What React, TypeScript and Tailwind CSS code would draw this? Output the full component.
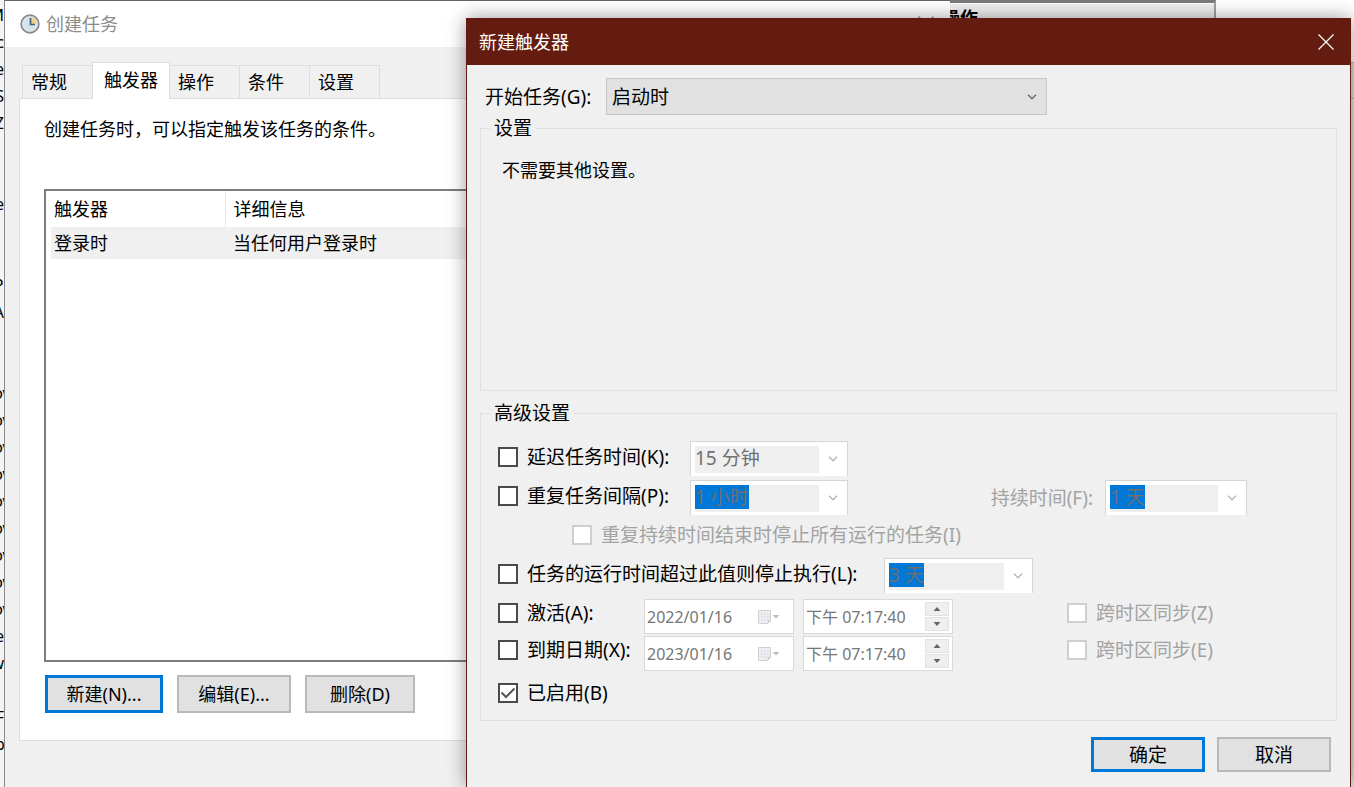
import { ReactNode, useState } from "react";
import clsx from "clsx";

const TABS = ["常规", "触发器", "操作", "条件", "设置"];

const BACKDROP_LINES = [
  "M", "c", "e", "S", "Z", "", "", "e", "", "", "Pr", "A", "", "",
  "ov", "ov", "ov", "ov", "ov", "ov", "ov", "ov", "ov", "e", "w", "", "F", "pl",
];

function ClockIcon() {
  return (
    <svg viewBox="0 0 20 20" className="size-5 shrink-0" aria-hidden="true">
      <circle cx="10" cy="10" r="9" fill="#b4b6b8" stroke="#85888a" strokeWidth="1.4" />
      <circle cx="10" cy="10" r="7.2" fill="#d3e4ee" stroke="#eceeef" strokeWidth="1" />
      <path d="M10 10V3.200A6.800 6.800 0 0 1 16.800 10Z" fill="#efd28a" />
      <path d="M10.500 4v6.500h4.500" fill="none" stroke="#4a6275" strokeWidth="1.7" />
    </svg>
  );
}

function CloseIcon() {
  return (
    <svg viewBox="0 0 16 16" className="size-4" fill="none" stroke="currentColor" strokeWidth="1.2">
      <path d="M.5.5l15 15M15.5.5l-15 15" />
    </svg>
  );
}

function Chevron() {
  return (
    <svg
      viewBox="0 0 10 6"
      className="pointer-events-none h-[6px] w-[10px] shrink-0"
      fill="none"
      stroke="currentColor"
      strokeWidth="1.3"
      aria-hidden="true"
    >
      <path d="M1 .8l4 4 4-4" />
    </svg>
  );
}

function CalendarIcon() {
  return (
    <svg viewBox="0 0 22 14" className="h-[14px] w-[22px]" aria-hidden="true">
      <path d="M.5.5h12v10l-3 3h-9Z" fill="#f4f5f9" stroke="#cfcfcf" />
      <path d="M1 4h11M1 7h11M1 10h11M4 1v12M7 1v12M10 1v9" stroke="#dadce2" strokeWidth=".8" />
      <path d="M12.500 10.500h-3v3Z" fill="#c4c6ca" />
      <path d="M14.500 5h7l-3.500 3.500Z" fill="#bdbdb8" />
    </svg>
  );
}

type PushButtonProps = {
  children: ReactNode;
  primary?: boolean;
  className?: string;
};

function PushButton({ children, primary, className }: PushButtonProps) {
  return (
    <button
      type="button"
      className={clsx(
        "bg-[#e1e1e1]",
        primary ? "border-[3px] border-[#0078d7]" : "border-2 border-[#b9b9b9]",
        className
      )}
    >
      {children}
    </button>
  );
}

type CheckProps = {
  label: string;
  disabled?: boolean;
  defaultChecked?: boolean;
  className?: string;
};

function Check({ label, disabled, defaultChecked, className }: CheckProps) {
  return (
    <label
      className={clsx(
        "flex shrink-0 items-center gap-[9px] whitespace-nowrap",
        disabled && "text-[#a3a3a3]",
        className
      )}
    >
      <span className="grid size-5 place-items-center">
        <input
          type="checkbox"
          disabled={disabled}
          defaultChecked={defaultChecked}
          className="peer col-start-1 row-start-1 size-5 appearance-none border-2 border-[#4a4a4a] bg-white disabled:border-[#cfcfcf]"
        />
        <svg
          viewBox="0 0 16 12"
          className="pointer-events-none col-start-1 row-start-1 hidden h-3 w-4 peer-checked:block"
          fill="none"
          stroke="#555"
          strokeWidth="2"
        >
          <path d="M1.500 5.500l4.500 4.500L14.500 1.500" />
        </svg>
      </span>
      {label}
    </label>
  );
}

type ComboProps = {
  name: string;
  value: string;
  selected?: boolean;
  className?: string;
};

function Combo({ name, value, selected, className }: ComboProps) {
  return (
    <div
      className={clsx(
        "flex h-[35px] shrink-0 items-center border border-b-0 border-[#d6d6d6] bg-white pl-1 text-[#b4b4b4]",
        className
      )}
    >
      <div className="h-[27px] flex-1 bg-[#efefef]">
        <select
          aria-label={name}
          disabled
          className={clsx(
            "field-sizing-content block h-6 appearance-none leading-6 text-[#6f6f6f] disabled:opacity-100",
            selected && "bg-[#0078d7]"
          )}
        >
          <option>{value}</option>
        </select>
      </div>
      <span className="flex w-7 justify-center">
        <Chevron />
      </span>
    </div>
  );
}

function DateField({ name, value }: { name: string; value: string }) {
  return (
    <div className="flex h-[35px] w-[150px] shrink-0 items-center border border-[#d9d9d9] bg-white pr-[13px]">
      <input
        aria-label={name}
        disabled
        defaultValue={value}
        className="w-full min-w-0 flex-1 px-[2px] text-base text-[#767676]"
      />
      <CalendarIcon />
    </div>
  );
}

function TimeField({ name, value }: { name: string; value: string }) {
  return (
    <div className="flex h-[35px] w-[150px] shrink-0 items-center border border-[#d9d9d9] bg-white pr-[3px]">
      <input
        aria-label={name}
        disabled
        defaultValue={value}
        className="w-full min-w-0 flex-1 px-[2px] text-base text-[#767676]"
      />
      <div className="flex w-6 flex-col gap-px text-[#666]">
        <button type="button" disabled aria-label="增加" className="grid h-[14px] place-items-center border border-[#e2e2e2] bg-[#efefef]">
          <svg viewBox="0 0 8 4" className="h-1 w-2" fill="currentColor">
            <path d="M4 0l3.500 4h-7Z" />
          </svg>
        </button>
        <button type="button" disabled aria-label="减少" className="grid h-[14px] place-items-center border border-[#e2e2e2] bg-[#efefef]">
          <svg viewBox="0 0 8 4" className="h-1 w-2" fill="currentColor">
            <path d="M4 4L.5 0h7Z" />
          </svg>
        </button>
      </div>
    </div>
  );
}

function Backdrop() {
  return (
    <>
      <div className="absolute inset-y-0 left-0 w-1 overflow-hidden bg-[#f4f4f4] pt-px text-base">
        {BACKDROP_LINES.map((line, i) => (
          <div
            key={i}
            className={clsx("flex h-[27px] items-center", line.length > 1 ? "justify-center" : "justify-end")}
          >
            {line}
          </div>
        ))}
      </div>
      <div className="absolute top-0 right-[138px] left-1/2 h-8 border-t-[3px] border-r-2 border-t-[#7b7b7b] border-r-[#a0a0a0] bg-[#efefef]">
        <div className="flex justify-end border-t border-white pr-[236px] leading-7 font-bold">操作</div>
      </div>
      <div className="absolute inset-y-0 right-0 flex w-[3px] flex-col pt-[62px]">
        <div className="h-[37px] border-y border-[#b5b5b5] bg-[#d8d8d8]" />
        <div className="flex-1 bg-[#e0e0e0]" />
      </div>
    </>
  );
}

function TaskWindow() {
  const [active, setActive] = useState("触发器");

  return (
    <section className="absolute inset-y-0 right-[404px] left-1 flex flex-col border-t border-l border-t-[#666] border-l-[#8a8a8a] bg-[#f0f0f0]">
      <header className="flex h-[46px] shrink-0 items-center gap-[6px] bg-white pr-4 pl-[15px] text-[#8c8c8c]">
        <ClockIcon />
        <h1>创建任务</h1>
        <button type="button" aria-label="关闭" className="ml-auto">
          <CloseIcon />
        </button>
      </header>

      <div role="tablist" className="flex h-[51px] shrink-0 items-end pl-[17px]">
        {TABS.map((tab) => (
          <button
            key={tab}
            type="button"
            role="tab"
            aria-selected={tab === active}
            onClick={() => setActive(tab)}
            className={clsx(
              "-mr-px border border-b-0 border-[#dedede]",
              tab === active
                ? "z-10 -mb-px h-[37px] w-[78px] bg-white pb-[3px]"
                : "h-[33px] w-[71px] pl-2 text-left"
            )}
          >
            {tab}
          </button>
        ))}
      </div>

      <div className="mr-[15px] mb-[46px] ml-[14px] flex flex-1 flex-col border border-[#dedede] bg-white px-6 pb-[27px]">
        <p className="pt-4 leading-7">创建任务时，可以指定触发该任务的条件。</p>
        <div className="mt-[46px] flex-1 border-2 border-[#7c7c7c] pl-[5px]">
          <table className="w-full table-fixed text-left">
            <thead>
              <tr className="h-9">
                <th className="w-[174px] border-r border-[#e5e5e5] pl-[3px] font-normal">触发器</th>
                <th className="pl-2 font-normal">详细信息</th>
              </tr>
            </thead>
            <tbody>
              <tr className="h-8 bg-[#f0f0f0]">
                <td className="pl-[3px]">登录时</td>
                <td className="pl-2">当任何用户登录时</td>
              </tr>
            </tbody>
          </table>
        </div>
        <div className="mt-[13px] flex gap-[14px] pl-px">
          <PushButton primary className="h-[38px] w-[118px]">新建(N)...</PushButton>
          <PushButton className="h-[38px] w-[114px]">编辑(E)...</PushButton>
          <PushButton className="h-[38px] w-[110px]">删除(D)</PushButton>
        </div>
      </div>
    </section>
  );
}

function TriggerDialog() {
  return (
    <section
      role="dialog"
      aria-labelledby="trigger-title"
      className="absolute top-[18px] right-[3px] bottom-0 left-[466px] border-x border-[#641c10] bg-[#f0f0f0] shadow-[0_0_18px_rgba(0,0,0,0.4)]"
    >
      <header className="flex h-[47px] items-center justify-between bg-[#641c10] pr-4 pl-3 text-white">
        <h2 id="trigger-title">新建触发器</h2>
        <button type="button" aria-label="关闭">
          <CloseIcon />
        </button>
      </header>

      <form className="px-[13px] pt-[13px] text-[19px] leading-6">
        <div className="flex items-center pl-[5px]">
          <label htmlFor="begin" className="w-[121px] shrink-0">
            开始任务(G):
          </label>
          <div className="grid w-[441px] items-center">
            <select
              id="begin"
              className="col-start-1 row-start-1 h-[37px] w-full appearance-none border border-[#c6c6c6] bg-[#e1e1e1] pl-[5px]"
            >
              <option>启动时</option>
            </select>
            <span className="pointer-events-none col-start-1 row-start-1 flex justify-end pr-[10px] text-[#666]">
              <Chevron />
            </span>
          </div>
        </div>

        <fieldset className="mt-px min-h-[275px] border border-[#e0e0e0] px-[21px]">
          <legend className="-ml-3 px-1">设置</legend>
          <p className="pt-4 text-lg leading-7">不需要其他设置。</p>
        </fieldset>

        <fieldset className="mt-[10px] border border-[#e0e0e0] pb-[15px] pl-[17px]">
          <legend className="-ml-2 px-1">高级设置</legend>
          <div className="flex flex-col pt-4">
            <div className="flex items-center">
              <Check label="延迟任务时间(K):" className="w-[192px] pb-1" />
              <Combo name="延迟任务时间" value="15 分钟" className="w-[158px]" />
            </div>
            <div className="mt-1 flex items-center">
              <Check label="重复任务间隔(P):" className="w-[192px] pb-1" />
              <Combo name="重复任务间隔" value="1 小时" selected className="w-[158px]" />
              <div className="ml-auto flex items-center gap-3 pr-[89px]">
                <span className="whitespace-nowrap text-[#a3a3a3]">持续时间(F):</span>
                <Combo name="持续时间" value="1 天" selected className="w-[142px]" />
              </div>
            </div>
            <div className="mt-2 flex pl-[74px]">
              <Check label="重复持续时间结束时停止所有运行的任务(I)" disabled />
            </div>
            <div className="mt-[11px] flex items-center">
              <Check label="任务的运行时间超过此值则停止执行(L):" className="w-[386px] pb-1" />
              <Combo name="停止执行" value="3 天" selected className="w-[149px]" />
            </div>
            <div className="mt-[6px] flex items-center gap-[9px]">
              <Check label="激活(A):" className="w-[137px] pb-2" />
              <DateField name="激活日期" value="2022/01/16" />
              <TimeField name="激活时间" value="下午 07:17:40" />
              <Check label="跨时区同步(Z)" disabled className="ml-[105px] pb-2" />
            </div>
            <div className="mt-[2px] flex items-center gap-[9px]">
              <Check label="到期日期(X):" className="w-[137px] pb-2" />
              <DateField name="到期日期" value="2023/01/16" />
              <TimeField name="到期时间" value="下午 07:17:40" />
              <Check label="跨时区同步(E)" disabled className="ml-[105px] pb-2" />
            </div>
            <div className="mt-[10px] flex">
              <Check label="已启用(B)" defaultChecked />
            </div>
          </div>
        </fieldset>

        <div className="mt-4 flex justify-end gap-3 pr-[6px]">
          <PushButton primary className="h-[35px] w-[114px]">确定</PushButton>
          <PushButton className="h-[35px] w-[114px]">取消</PushButton>
        </div>
      </form>
    </section>
  );
}

export default function App() {
  return (
    <main className="relative h-screen overflow-hidden bg-white font-['Noto_Sans','Noto_Sans_CJK_SC',sans-serif] text-lg text-black">
      <Backdrop />
      <TaskWindow />
      <TriggerDialog />
    </main>
  );
}
